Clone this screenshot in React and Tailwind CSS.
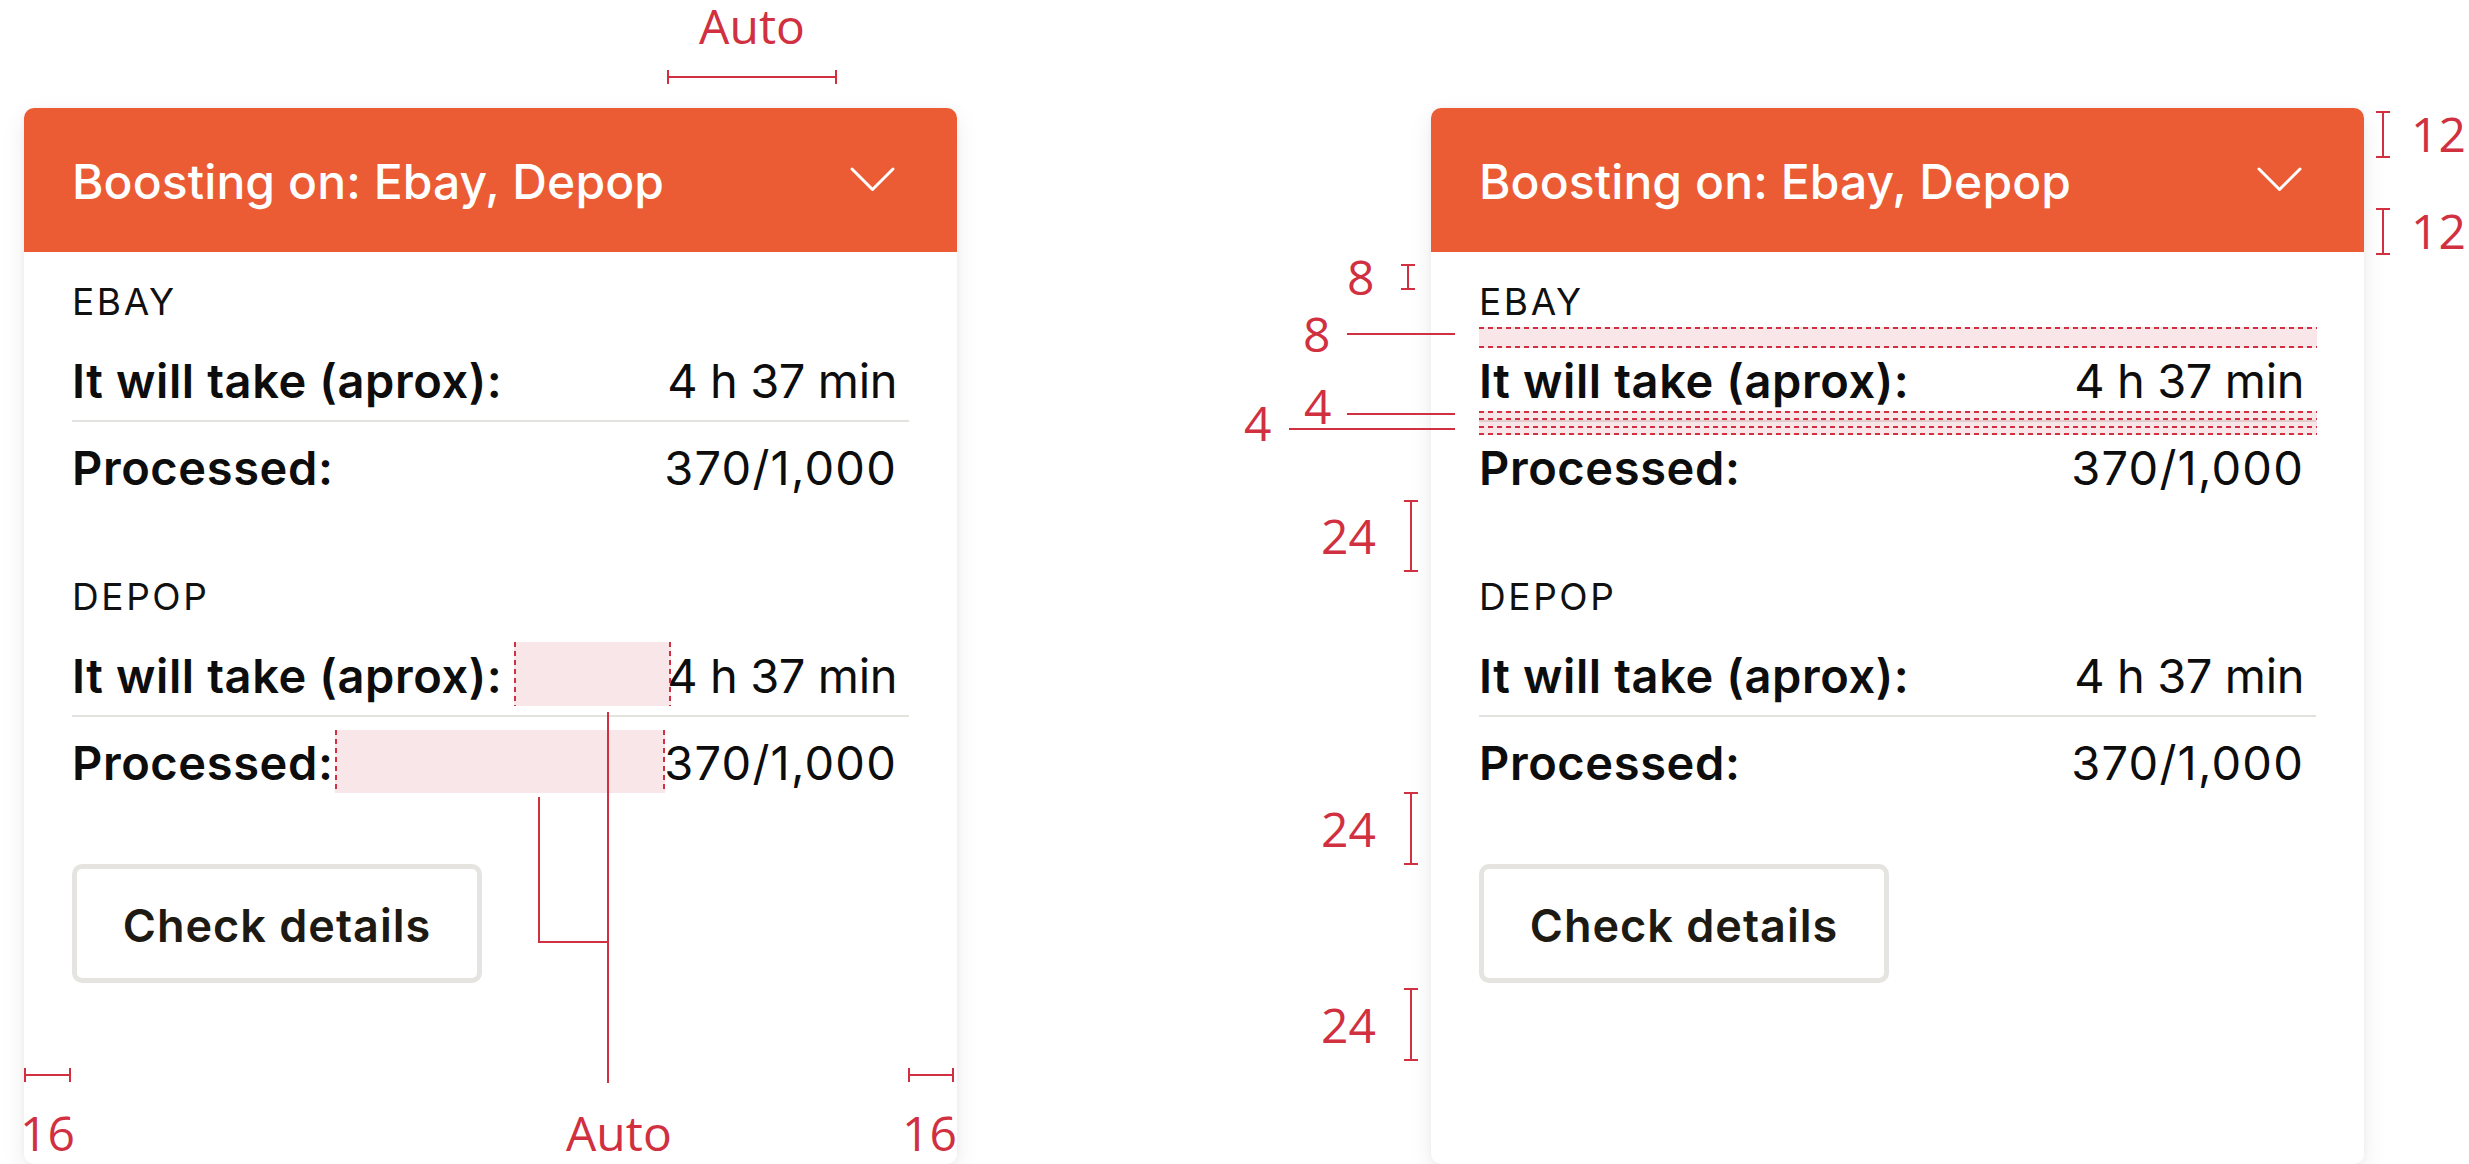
import React from 'react'

// redline pieces drawn over the cards
function IBeam({ className = '' }) {
  return (
    <div className={`flex w-[14px] shrink-0 flex-col items-center ${className}`}>
      <div className="h-[2px] w-full bg-[#d0303f]" />
      <div className="w-[2px] flex-1 bg-[#d0303f]" />
      <div className="h-[2px] w-full bg-[#d0303f]" />
    </div>
  )
}

function HBeam({ className = '' }) {
  return (
    <div className={`flex h-[14px] items-center ${className}`}>
      <div className="h-full w-[2px] bg-[#d0303f]" />
      <div className="h-[2px] flex-1 bg-[#d0303f]" />
      <div className="h-full w-[2px] bg-[#d0303f]" />
    </div>
  )
}

function Note({ children, className = '' }) {
  return (
    <span className={`whitespace-nowrap font-['Open_Sans',sans-serif] text-[48px] leading-[48px] text-[#d0303f] ${className}`}>
      {children}
    </span>
  )
}

// label + I-beam, for the vertical spacing marks left of the card
function Spacing({ label, className, beam }) {
  return (
    <div className={`absolute flex items-center gap-[28px] ${className}`}>
      <Note>{label}</Note>
      <IBeam className={beam} />
    </div>
  )
}

function Row({ label, value, valueTrack = 'tracking-[-0.4px]' }) {
  return (
    <div className="flex justify-between pr-[12px] text-[47px] leading-[57px] text-[#0d0d0d]">
      <span className="font-semibold tracking-[0.6px]">{label}</span>
      <span className={valueTrack}>{value}</span>
    </div>
  )
}

function Platform({ name, className = '' }) {
  return (
    <div className={className}>
      <div className="text-[37px] leading-[45px] tracking-[2.6px] text-[#111]">{name}</div>
      <div className="mt-[28px]">
        <Row label="It will take (aprox):" value="4 h 37 min" />
      </div>
      <div className="mt-[11px] h-[2px] bg-[#e4e2de]" />
      <div className="mt-[17px]">
        <Row label="Processed:" value="370/1,000" valueTrack="tracking-[1.2px]" />
      </div>
    </div>
  )
}

function BoostCard({ children }) {
  return (
    <div className="relative w-[933px] shrink-0 rounded-[10px] bg-white shadow-[0_8px_24px_rgba(0,0,0,0.08),0_0_6px_rgba(0,0,0,0.04)]">
      <div className="flex items-center justify-between rounded-t-[10px] bg-[#eb5b34] px-[48px] pt-[48px] pb-[44px]">
        <h2 className="text-[48px] font-medium leading-[52px] tracking-[0.1px] text-white">Boosting on: Ebay, Depop</h2>
        <svg width="70" height="52" viewBox="0 0 70 52" fill="none">
          <path d="M13 13 L33.5 33.5 L54 13" stroke="white" strokeWidth="3" strokeLinecap="round" strokeLinejoin="round" />
        </svg>
      </div>

      <div className="px-[48px] pt-[27px] pb-[71px]">
        <Platform name="EBAY" />
        <Platform name="DEPOP" className="mt-[78px]" />
        <button className="mt-[73px] flex w-[410px] justify-center rounded-[10px] border-[5px] border-[#e5e4e0] bg-white pt-[29px] pb-[25px] text-[45px] font-semibold leading-[55px] tracking-[1px] text-[#1c1a12]">
          Check details
        </button>
      </div>

      {children}
    </div>
  )
}

const dashX = 'bg-[repeating-linear-gradient(90deg,#d0303f_0_5px,transparent_5px_9px)]'
const dashY = 'bg-[repeating-linear-gradient(180deg,#d0303f_0_5px,transparent_5px_9px)]'

export default function App() {
  return (
    <div className="flex h-screen w-full gap-[474px] overflow-hidden bg-white pt-[108px] pl-[24px] font-['Inter',sans-serif]">
      {/* left: widths */}
      <BoostCard>
        <div className="absolute left-[643px] top-[-106px] flex w-[170px] flex-col items-center gap-[20px]">
          <Note>Auto</Note>
          <HBeam className="w-full" />
        </div>

        {/* auto gaps in the depop rows */}
        <div className="absolute left-[490px] top-[534px] flex h-[64px] w-[157px] justify-between bg-[#d0303f]/12">
          <div className={`w-[2px] ${dashY}`} />
          <div className={`w-[2px] ${dashY}`} />
        </div>
        <div className="absolute left-[311px] top-[622px] flex h-[63px] w-[330px] justify-between bg-[#d0303f]/12">
          <div className={`w-[2px] ${dashY}`} />
          <div className={`w-[2px] ${dashY}`} />
        </div>
        <div className="absolute left-[583px] top-[604px] h-[371px] w-[2px] bg-[#d0303f]" />
        <div className="absolute left-[514px] top-[689px] h-[146px] w-[2px] bg-[#d0303f]" />
        <div className="absolute left-[514px] top-[833px] h-[2px] w-[71px] bg-[#d0303f]" />

        <div className="absolute left-0 top-[960px] flex w-[930px] items-start">
          <div className="flex w-[47px] flex-col gap-[27px]">
            <HBeam className="w-full" />
            <Note className="ml-[-4px]">16</Note>
          </div>
          <Note className="mt-[41px] ml-[495px]">Auto</Note>
          <div className="ml-auto flex w-[46px] flex-col gap-[27px]">
            <HBeam className="w-full" />
            <Note className="ml-[-6px]">16</Note>
          </div>
        </div>
      </BoostCard>

      {/* right: vertical spacing */}
      <BoostCard>
        <div className="absolute left-[945px] top-[2px] flex flex-col gap-[49px]">
          <div className="flex items-center gap-[21px]">
            <IBeam className="h-[47px]" />
            <Note>12</Note>
          </div>
          <div className="flex items-center gap-[21px]">
            <IBeam className="h-[47px]" />
            <Note>12</Note>
          </div>
        </div>

        <Spacing label="8" className="left-[-84px] top-[145px]" beam="h-[26px] ml-[-1px]" />

        <div className="absolute left-[48px] top-[219px] flex h-[21px] w-[838px] flex-col justify-between bg-[#d0303f]/12">
          <div className={`h-[2px] ${dashX}`} />
          <div className={`h-[2px] ${dashX}`} />
        </div>
        <div className="absolute left-[-128px] top-[202px] flex items-center gap-[17px]">
          <Note>8</Note>
          <div className="h-[2px] w-[108px] bg-[#d0303f]" />
        </div>

        <div className="absolute left-[48px] top-[303px] flex h-[24px] w-[838px] flex-col justify-between bg-[#d0303f]/12">
          <div className={`h-[2px] ${dashX}`} />
          <div className={`h-[2px] ${dashX}`} />
          <div className={`h-[2px] ${dashX}`} />
          <div className={`h-[2px] ${dashX}`} />
        </div>
        <Note className="absolute left-[-127px] top-[274px]">4</Note>
        <div className="absolute left-[-84px] top-[305px] h-[2px] w-[108px] bg-[#d0303f]" />
        <Note className="absolute left-[-187px] top-[291px]">4</Note>
        <div className="absolute left-[-142px] top-[320px] h-[2px] w-[166px] bg-[#d0303f]" />

        <Spacing label="24" className="left-[-110px] top-[392px]" beam="h-[72px]" />
        <Spacing label="24" className="left-[-110px] top-[684px]" beam="h-[73px]" />
        <Spacing label="24" className="left-[-110px] top-[880px]" beam="h-[73px]" />
      </BoostCard>
    </div>
  )
}
